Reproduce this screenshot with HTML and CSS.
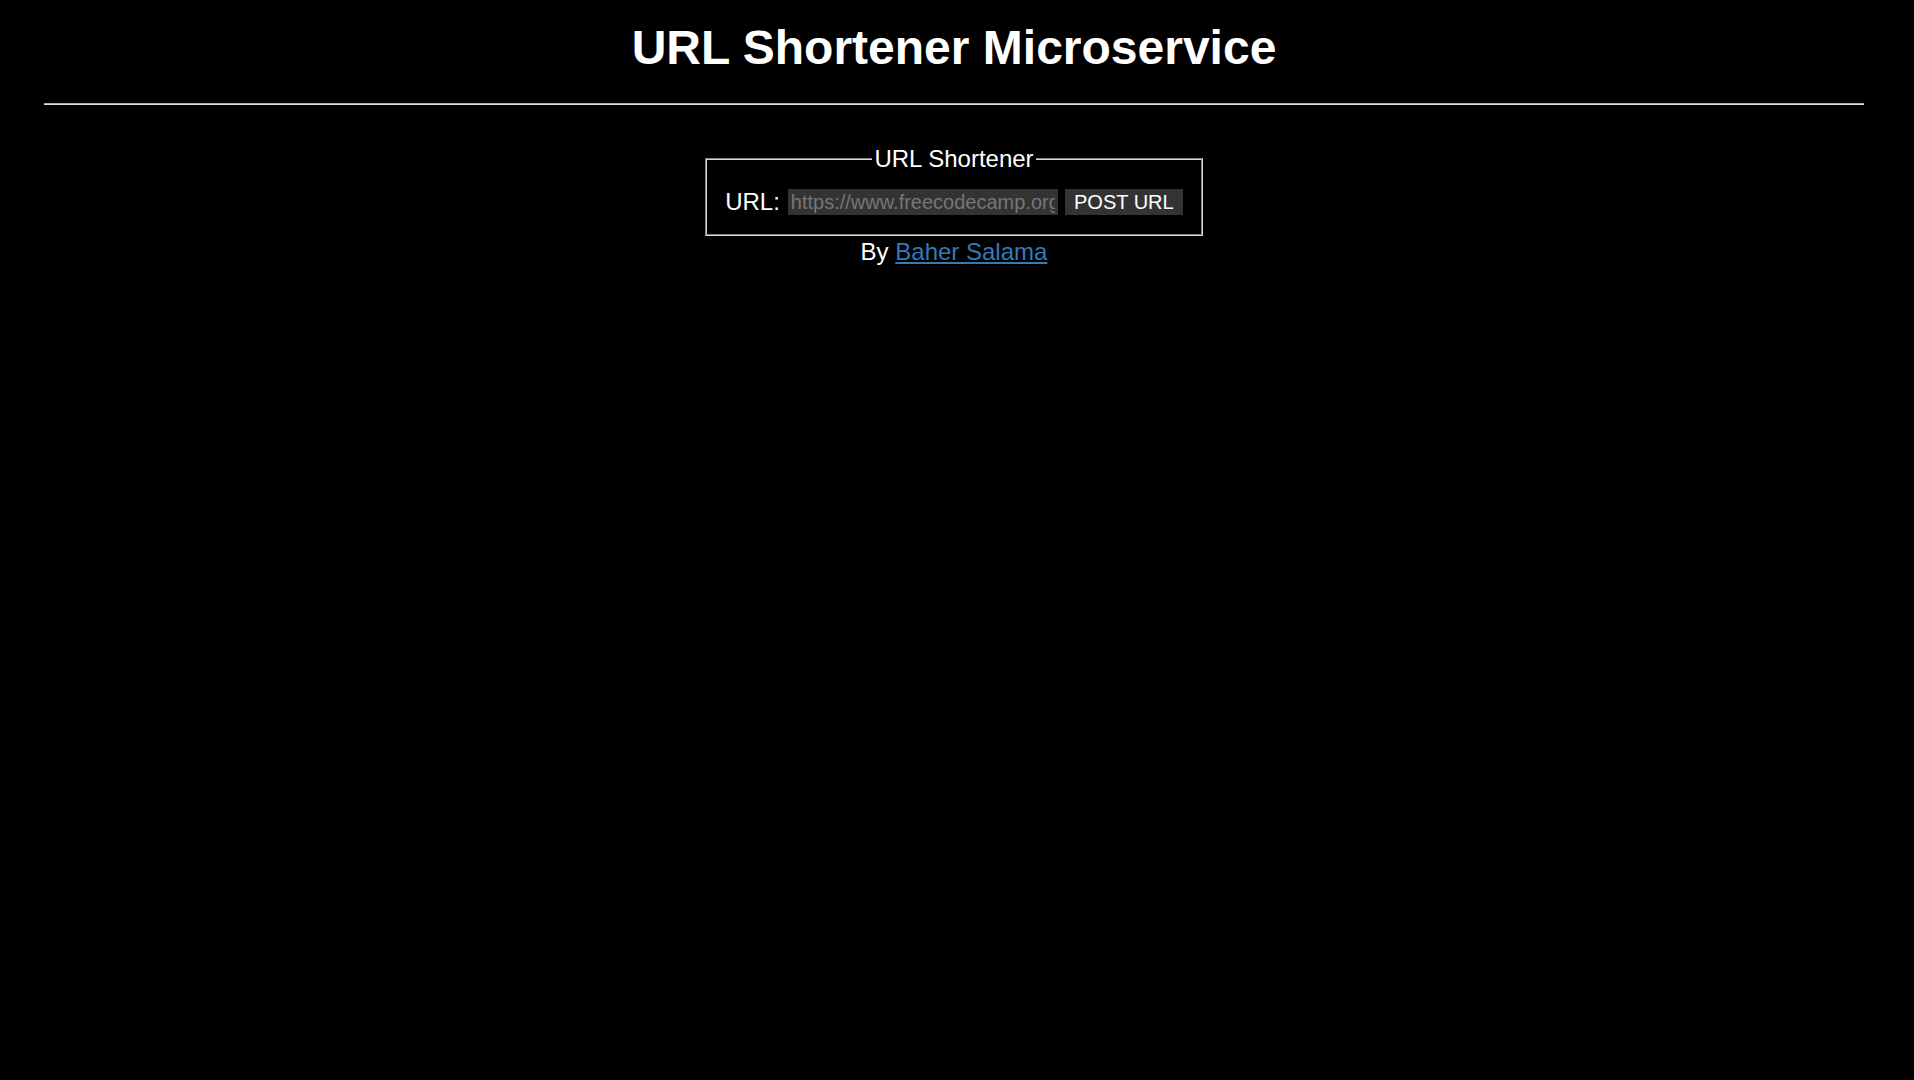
FILE: index.html
```html
<!DOCTYPE html>
<html lang="en">
<head>
<meta charset="utf-8">
<title>URL Shortener Microservice</title>
<link rel="stylesheet" href="styles.css">
</head>
<body>
  <header class="header">
    <h1 class="title">URL Shortener Microservice</h1>
  </header>
  <hr class="divider">
  <main class="main">
    <form class="form" action="/api/shorturl" method="POST">
      <fieldset class="fieldset">
        <legend class="legend">URL Shortener</legend>
        <div class="row">
          <label class="label" for="url_input">URL:</label>
          <input class="input" id="url_input" type="text" name="url" placeholder="https://www.freecodecamp.org/">
          <button class="button" type="submit">POST URL</button>
        </div>
      </fieldset>
    </form>
    <p class="byline">By <a class="link" href="#">Baher Salama</a></p>
  </main>
</body>
</html>
```

FILE: styles.css
```css
html, body {
  background: #000;
}
body {
  margin: 0 6px 0 0;
  color: #fff;
  font-family: "Liberation Sans", Arial, sans-serif;
}
.header {
  display: flex;
  justify-content: center;
}
.title {
  margin: 20px 0 0;
  font-size: 48px;
  font-weight: bold;
  line-height: 55px;
}
.divider {
  margin: 28px 44px 0;
  height: 0;
  border: none;
  border-top: 1px solid #aaa;
  border-bottom: 1px solid #ddd;
}
.main {
  display: flex;
  flex-direction: column;
  align-items: center;
  padding-top: 40px;
}
.form {
  margin: 0;
}
.fieldset {
  margin: 0;
  padding: 0 18px 18px;
  border: 2px groove #d8d8d8;
  font-size: 24px;
}
.legend {
  padding: 0 2px;
  font-size: 24px;
  margin: 0 auto;
}
.row {
  display: flex;
  align-items: center;
  margin-top: 15px;
}
.label {
  font-size: 24px;
  margin-right: 8px;
}
.input {
  box-sizing: border-box;
  width: 270px;
  height: 26px;
  padding: 0 3px;
  border: none;
  background: #333;
  color: #fff;
  font-family: "Liberation Sans", Arial, sans-serif;
  font-size: 20px;
  outline: none;
}
.input::placeholder {
  color: #767676;
}
.button {
  box-sizing: border-box;
  margin-left: 7px;
  width: 118px;
  height: 26px;
  padding: 0;
  border: none;
  background: #333;
  color: #fff;
  font-family: "Liberation Sans", Arial, sans-serif;
  font-size: 20px;
}
.byline {
  margin: 2px 0 0;
  font-size: 24px;
}
.link {
  color: #337ab7;
  text-decoration: underline;
}
```
